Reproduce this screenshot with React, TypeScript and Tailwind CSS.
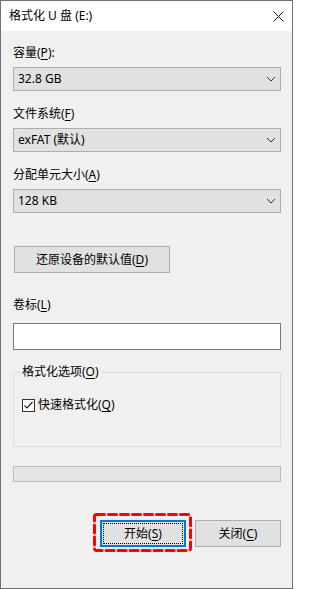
import React, { useState } from "react";

const font = { fontFamily: '"Noto Sans", "Noto Sans CJK SC", sans-serif' };

function Key({ k }: { k: string }) {
  return <span className="underline underline-offset-2">{k}</span>;
}

function Chevron() {
  return (
    <svg width="10" height="6" viewBox="0 0 10 6" className="text-[#333]">
      <path d="M1 1 L5 5 L9 1" fill="none" stroke="currentColor" strokeWidth="1" />
    </svg>
  );
}

function Select({ value }: { value: string }) {
  return (
    <div className="flex h-[24px] items-center justify-between border border-[#adadad] bg-[#e1e1e1] pl-[4px] pr-[4px]">
      <span className="text-[12px] leading-none text-black">{value}</span>
      <Chevron />
    </div>
  );
}

export default function App() {
  const [quick, setQuick] = useState(true);

  return (
    <div className="w-[294px] h-[589px] bg-white" style={font}>
      <div className="flex h-[589px] w-[293px] flex-col border border-[#6f6f6f] bg-[#f0f0f0]">
        {/* title bar */}
        <div className="flex h-[30px] items-center justify-between bg-white pl-[8px] pr-[8px]">
          <span className="text-[12px] text-black">格式化 U 盘 (E:)</span>
          <svg width="11" height="11" viewBox="0 0 11 11">
            <path d="M0.5 0.5 L10.5 10.5 M10.5 0.5 L0.5 10.5" stroke="#111" strokeWidth="1" />
          </svg>
        </div>

        <div className="flex flex-col pl-[12px] pr-[11px] text-[12px] text-black">
          <div className="mt-[14px] h-[16px] leading-[16px]">
            容量(<Key k="P" />):
          </div>
          <div className="mt-[6px]">
            <Select value="32.8 GB" />
          </div>

          <div className="mt-[15px] h-[16px] leading-[16px]">
            文件系统(<Key k="F" />)
          </div>
          <div className="mt-[6px]">
            <Select value="exFAT (默认)" />
          </div>

          <div className="mt-[15px] h-[16px] leading-[16px]">
            分配单元大小(<Key k="A" />)
          </div>
          <div className="mt-[6px]">
            <Select value="128 KB" />
          </div>

          <button className="mt-[33px] ml-[1px] flex h-[27px] w-[156px] items-center justify-center border border-[#adadad] bg-[#e1e1e1] text-[12px]">
            还原设备的默认值(<Key k="D" />)
          </button>

          <div className="mt-[24px] h-[16px] leading-[16px]">
            卷标(<Key k="L" />)
          </div>
          <div className="mt-[10px] h-[27px] border border-[#7a7a7a] bg-white" />

          {/* options group */}
          <div className="relative mt-[22px] h-[75px] border border-[#dcdcdc]">
            <span className="absolute left-[6px] top-[-9px] bg-[#f0f0f0] px-[2px] leading-[16px]">
              格式化选项(<Key k="O" />)
            </span>
            <label className="mt-[24px] ml-[8px] flex items-center gap-[3px]">
              <span
                onClick={() => setQuick(!quick)}
                className="flex h-[13px] w-[13px] items-center justify-center border border-[#333] bg-white"
              >
                {quick && (
                  <svg width="11" height="11" viewBox="0 0 11 11">
                    <path d="M1.5 5.5 L4 8 L9.5 2" fill="none" stroke="#222" strokeWidth="1.2" />
                  </svg>
                )}
              </span>
              <span className="leading-[16px]">
                快速格式化(<Key k="Q" />)
              </span>
            </label>
          </div>

          {/* progress */}
          <div className="mt-[19px] h-[16px] border border-[#bcbcbc] bg-[#e6e6e6]" />

          {/* buttons */}
          <div className="mt-[38px] flex justify-end gap-[9px]">
            <div className="relative">
              <button className="flex h-[27px] w-[86px] items-center justify-center border-2 border-[#0078d7] bg-[#e1e1e1] p-[1px] text-[12px]">
                <span className="flex h-full w-full items-center justify-center border border-dotted border-black">
                  开始(<Key k="S" />)
                </span>
              </button>
              {/* red highlight around the start button */}
              <svg
                className="pointer-events-none absolute left-[-7px] top-[-7px]"
                width="99"
                height="39"
                viewBox="0 0 99 39"
              >
                <rect
                  x="1.5"
                  y="1.5"
                  width="96"
                  height="36"
                  rx="2"
                  fill="none"
                  stroke="#ff0000"
                  strokeWidth="3"
                  strokeDasharray="8 4"
                  strokeLinecap="round"
                />
              </svg>
            </div>
            <button className="flex h-[27px] w-[86px] items-center justify-center border border-[#adadad] bg-[#e1e1e1] text-[12px]">
              关闭(<Key k="C" />)
            </button>
          </div>
        </div>
      </div>
    </div>
  );
}
